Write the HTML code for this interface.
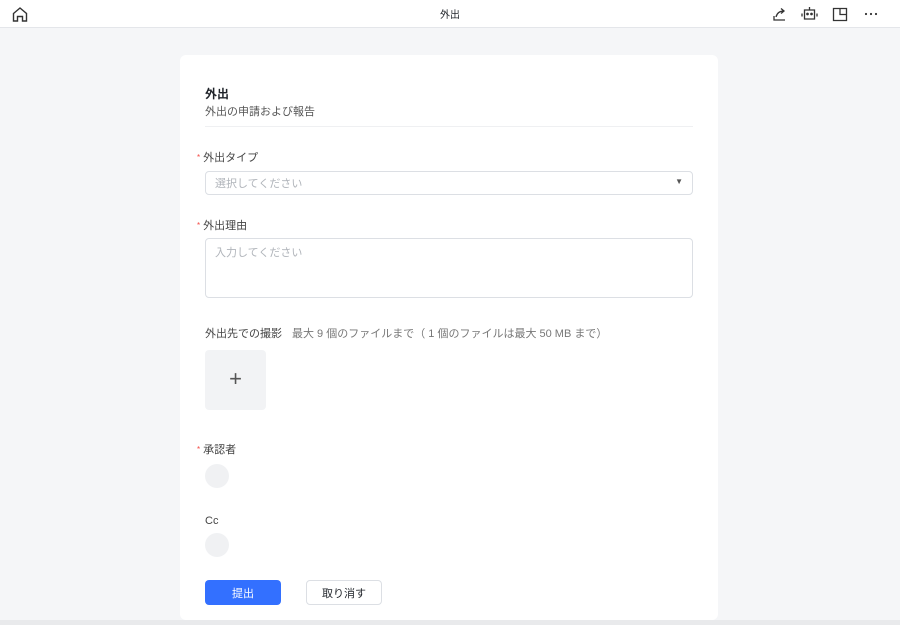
<!DOCTYPE html>
<html><head><meta charset="utf-8"><style>
*{box-sizing:border-box;margin:0;padding:0}
body{width:900px;height:625px;background:#f5f6f8;font-family:"Liberation Sans","Noto Sans CJK JP",sans-serif;position:relative;overflow:hidden;color:#1f2329}
.top{position:absolute;left:0;top:0;width:900px;height:28px;background:#fff;border-bottom:1px solid #e4e6ea}
.title{position:absolute;left:0;width:900px;top:9px;text-align:center;font-size:10px;line-height:14px}
.card{position:absolute;left:180px;top:55px;width:538px;height:565px;background:#fff;border-radius:6px}
.a{position:absolute;font-size:11px;line-height:14px}
.lab{color:#444}
.lab i{color:#f54a45;font-style:normal;font-size:8px;margin-right:3px;position:relative;top:-1px}
.box{position:absolute;left:25px;width:488px;border:1px solid #dcdfe4;border-radius:4px}
.ph{color:#b0b4ba;font-size:11px;line-height:14px}
.circ{position:absolute;left:25px;width:24px;height:24px;border-radius:50%;background:#f0f1f3}
.btn{position:absolute;top:525px;height:25px;border-radius:4px;font-size:11px;display:flex;align-items:center;justify-content:center}
.bottom{position:absolute;left:0;top:620px;width:900px;height:5px;background:#e9eaec}
</style></head><body>
<div class="top">
<svg style="position:absolute;left:12px;top:7px" width="16" height="15" viewBox="0 0 16 15" fill="none" stroke="#333" stroke-width="1.4"><path d="M1.5 6.5L8 1l6.5 5.5V14h-4V9.5h-5V14h-4z"/></svg>
<div class="title">外出</div>
<svg style="position:absolute;left:772px;top:7px" width="15" height="15" viewBox="0 0 15 15" fill="none" stroke="#333" stroke-width="1.3"><path d="M2 9v4h11M4 10c1-4 4-6 8-6M9 1.5l3 2.5-3 2.5"/></svg>
<svg style="position:absolute;left:801px;top:5px" width="17" height="17" viewBox="0 0 17 17" fill="none" stroke="#333" stroke-width="1.3"><path d="M8.5 2v3M3.5 5h10v9h-10zM1 8.5v3M16 8.5v3"/><circle cx="6.5" cy="9" r=".7" fill="#333"/><circle cx="10.5" cy="9" r=".7" fill="#333"/></svg>
<svg style="position:absolute;left:832px;top:7px" width="16" height="15" viewBox="0 0 16 15" fill="none" stroke="#333" stroke-width="1.3"><path d="M1.5 1.5h13v12h-13zM8 1.5v6h6.5"/></svg>
<svg style="position:absolute;left:864px;top:12px" width="14" height="4" viewBox="0 0 14 4" fill="#333"><circle cx="2" cy="2" r="1.1"/><circle cx="7" cy="2" r="1.1"/><circle cx="12" cy="2" r="1.1"/></svg>
</div>
<div class="card">
<div class="a" style="left:25px;top:32px;font-size:12px;font-weight:bold">外出</div>
<div class="a" style="left:25px;top:50px;color:#555">外出の申請および報告</div>
<div style="position:absolute;left:25px;top:71px;width:488px;height:1px;background:#eff0f2"></div>
<div class="a lab" style="left:17px;top:96px"><i>*</i>外出タイプ</div>
<div class="box" style="top:116px;height:24px"><span class="ph" style="position:absolute;left:9px;top:5px">選択してください</span><span style="position:absolute;right:9px;top:5px;font-size:8px;color:#555">▼</span></div>
<div class="a lab" style="left:17px;top:164px"><i>*</i>外出理由</div>
<div class="box" style="top:183px;height:60px"><span class="ph" style="position:absolute;left:9px;top:7px">入力してください</span></div>
<div class="a" style="left:25px;top:272px;color:#444">外出先での撮影<span style="color:#777;margin-left:10px">最大 9 個のファイルまで（ 1 個のファイルは最大 50 MB まで）</span></div>
<div style="position:absolute;left:25px;top:295px;width:61px;height:60px;background:#f2f3f5;border-radius:4px;text-align:center;line-height:58px;font-size:22px;font-weight:300;color:#555">+</div>
<div class="a lab" style="left:17px;top:388px"><i>*</i>承認者</div>
<div class="circ" style="top:409px"></div>
<div class="a" style="left:25px;top:459px;color:#444">Cc</div>
<div class="circ" style="top:478px"></div>
<div class="btn" style="left:25px;width:76px;background:#3370ff;color:#fff">提出</div>
<div class="btn" style="left:126px;width:76px;border:1px solid #dcdfe4;background:#fff">取り消す</div>
</div>
<div class="bottom"></div>
</body></html>
